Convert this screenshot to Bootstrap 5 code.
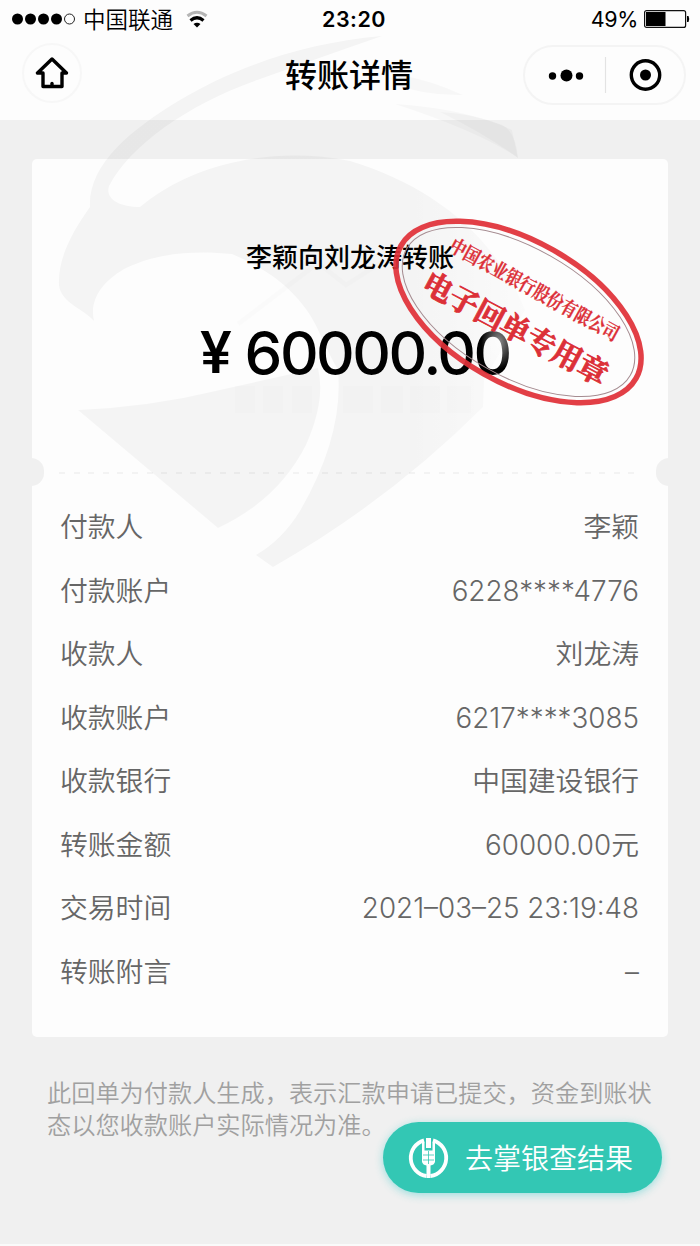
<!DOCTYPE html>
<html lang="zh-CN">

<head>
  <meta charset="UTF-8">
  <meta name="viewport" content="width=device-width, initial-scale=1.0">
  <link href="https://cdn.jsdelivr.net/npm/bootstrap@5.3.2/dist/css/bootstrap.min.css" rel="stylesheet">
  <title>转账详情</title>
  <style>
    body {
      background: #f0f0f0;
      font-family: Inter, "Noto Sans CJK SC", sans-serif;
      color: #000;
    }
    .screen {
      width: 700px;
      height: 1246px;
      overflow: hidden;
      border-bottom: 2px solid #fafafa;
    }
    .topbar {
      height: 120px;
      background: #fdfdfd;
    }
    .status {
      height: 38px;
      padding: 0 10px 0 12px;
      font-size: 22.5px;
      line-height: 38px;
    }
    .status > div {
      flex: 1 1 0;
    }
    .carrier {
      font-weight: 350;
      margin-left: 7px;
      margin-right: 13px;
      padding-top: 1px;
    }
    .clock {
      font-size: 21.5px;
      font-weight: 600;
      letter-spacing: .5px;
      padding-left: 6px;
    }
    .percent {
      font-size: 21.5px;
      letter-spacing: -.4px;
      margin-right: 6px;
    }
    .titlebar {
      height: 75px;
      padding: 0 14px 0 22px;
    }
    .titlebar h1 {
      font-size: 32px;
      font-weight: 500;
      line-height: 75px;
      padding-left: 93px;
    }
    .home-btn {
      width: 60px;
      height: 60px;
      border: 2px solid #f7f7f7;
      border-radius: 50%;
      margin-top: -6px;
    }
    .capsule {
      width: 163px;
      height: 60px;
      border: 2px solid #f4f4f4;
      border-radius: 30px;
      margin-top: -2px;
    }
    .receipt {
      width: 636px;
      height: 878px;
      margin: 39px auto 0;
      background: #fdfdfd;
      border-radius: 5px;
    }
    .summary {
      height: 313px;
      padding-top: 79px;
    }
    .summary p {
      font-size: 26px;
      line-height: 40px;
      font-weight: 500;
    }
    .amount {
      font-size: 60px;
      line-height: 80px;
      font-weight: 500;
      margin-top: 35px;
      padding-left: 10px;
      gap: 13px;
      letter-spacing: -2.5px;
    }
    .yen {
      font-family: Roboto, sans-serif;
      font-size: 59px;
      letter-spacing: 0;
    }
    .tear {
      height: 2px;
      margin: 0 27px;
      background: repeating-linear-gradient(90deg, #f3f3f3 0 6px, transparent 6px 14.6px);
    }
    .notch {
      top: 299px;
      width: 26px;
      height: 28px;
      border-radius: 13px;
      background: #f0f0f0;
    }
    .notch-l { left: -14px; }
    .notch-r { right: -14px; }
    .details {
      padding: 21px 29px 0 28px;
      color: #666;
      font-size: 27.8px;
      font-weight: 350;
    }
    .details > div {
      height: 63.5px;
      line-height: 64.5px;
    }
    .note {
      padding: 41px 39px 0 47px;
      font-size: 24.2px;
      line-height: 32px;
      font-weight: 350;
      color: #a0a0a0;
    }
    .go-btn {
      left: 383px;
      top: 1122px;
      width: 279px;
      height: 71px;
      border-radius: 36px;
      background: #33c7b4;
      color: #fff;
      font-size: 28px;
      font-weight: 350;
      line-height: 32px;
      gap: 16px;
      padding-left: 25px;
      box-shadow: 0 2px 9px rgba(51, 199, 200, .45);
    }
    .go-btn span {
      padding-top: 2px;
    }
    .stamp text {
      font-family: "Noto Serif CJK SC", "Noto Sans CJK SC", serif;
      font-weight: 700;
      fill: #dc3038;
      stroke: #dc3038;
    }
  </style>
</head>

<body>
  <div class="screen position-relative">
    <header class="topbar">
      <div class="status d-flex align-items-center">
        <div class="d-flex align-items-center">
          <svg width="64" height="12" viewBox="0 0 64 12">
            <circle cx="5.5" cy="6" r="5.5"/><circle cx="18.5" cy="6" r="5.5"/>
            <circle cx="31.5" cy="6" r="5.5"/><circle cx="44.5" cy="6" r="5.5"/>
            <circle cx="57.5" cy="6" r="5" fill="none" stroke="#222" stroke-width="1"/>
          </svg>
          <span class="carrier">中国联通</span>
          <svg width="22" height="18" viewBox="0 0 22 18" fill="none" stroke-width="3">
            <path d="M1.500 6Q11-1.500 20.500 6" stroke="#b5b5b5"/>
            <path d="M4.500 10.500Q11 5 17.500 10.500" stroke="#000" stroke-width="3.200"/>
            <path d="M7.500 14Q11 11.500 14.500 14L11 17.500z" fill="#000"/>
          </svg>
        </div>
        <div class="clock text-center">23:20</div>
        <div class="d-flex align-items-center justify-content-end">
          <span class="percent">49%</span>
          <svg width="46" height="18" viewBox="0 0 46 18">
            <rect x=".6" y=".6" width="41" height="16.800" rx="2" fill="none" stroke="#111" stroke-width="1.200"/>
            <rect x="2" y="2" width="19.500" height="14"/>
            <path d="M43 6h1.500q1.500 3 0 6H43z"/>
          </svg>
        </div>
      </div>
      <div class="titlebar d-flex align-items-center justify-content-between">
        <div class="home-btn d-flex align-items-center justify-content-center">
          <svg width="34" height="32" viewBox="0 0 34 32" fill="none" stroke="#000" stroke-width="3.400" stroke-linejoin="round" stroke-linecap="round">
            <path d="M17 2L2.500 16H8V29.500H27V16H31.500z"/>
            <path d="M17 26.500v2"/>
          </svg>
        </div>
        <h1 class="m-0">转账详情</h1>
        <div class="capsule d-flex align-items-center">
          <svg width="159" height="56" viewBox="0 0 159 56">
            <circle cx="27.500" cy="29" r="3.700"/><circle cx="41.500" cy="28.500" r="6"/><circle cx="54.500" cy="29" r="3.700"/>
            <path d="M80.500 10V46" stroke="#e3e3e3" stroke-width="1.200"/>
            <circle cx="120.500" cy="28" r="14.200" fill="none" stroke="#000" stroke-width="3.400"/>
            <circle cx="120.500" cy="28" r="5.500"/>
          </svg>
        </div>
      </div>
    </header>

    <main class="receipt position-relative">
      <div class="summary text-center">
        <p class="m-0">李颖向刘龙涛转账</p>
        <div class="amount d-flex justify-content-center"><span class="yen">¥</span><span>60000.00</span></div>
      </div>
      <div class="tear"></div>
      <span class="notch notch-l position-absolute"></span>
      <span class="notch notch-r position-absolute"></span>
      <div class="details">
        <div class="d-flex justify-content-between"><span>付款人</span><span>李颖</span></div>
        <div class="d-flex justify-content-between"><span>付款账户</span><span>6228****4776</span></div>
        <div class="d-flex justify-content-between"><span>收款人</span><span>刘龙涛</span></div>
        <div class="d-flex justify-content-between"><span>收款账户</span><span>6217****3085</span></div>
        <div class="d-flex justify-content-between"><span>收款银行</span><span>中国建设银行</span></div>
        <div class="d-flex justify-content-between"><span>转账金额</span><span>60000.00元</span></div>
        <div class="d-flex justify-content-between"><span>交易时间</span><span>2021–03–25 23:19:48</span></div>
        <div class="d-flex justify-content-between"><span>转账附言</span><span>–</span></div>
      </div>
    </main>

    <p class="note m-0">此回单为付款人生成，表示汇款申请已提交，资金到账状态以您收款账户实际情况为准。</p>

    <!-- eagle watermark and seal lie over the page -->
    <svg class="stamp position-absolute top-0 start-0 pe-none" width="700" height="620" viewBox="0 0 700 620">
      <defs>
        <radialGradient id="haze">
          <stop offset="0" stop-color="#fff" stop-opacity=".55"/>
          <stop offset="1" stop-color="#fff" stop-opacity="0"/>
        </radialGradient>
        <linearGradient id="fade" x1="0" x2="1">
          <stop offset="0" stop-opacity=".037"/>
          <stop offset=".75" stop-opacity=".037"/>
          <stop offset="1" stop-opacity=".01"/>
        </linearGradient>
      </defs>
      <path fill="url(#fade)" d="M382 36C300 43 230 70 180 100C130 130 88 165 90 207C70 235 58 260 59 285C61 303 84 309 94 321C89 300 102 282 124 269C160 251 200 251 232 254C276 272 306 300 320 334Q329 354 338 370Q344 435 300 511Q282 540 256 555L273 567Q390 500 483 407L484 380L525 310C495 235 430 185 350 161C270 145 190 165 140 207C118 207 105 198 109 186C130 145 190 103 260 79Q330 54 382 36z"/>
      <path fill-opacity=".037" d="M78 410Q150 407 220 390L318 368Q326 400 306 445Q278 500 218 528z"/>
      <path fill-opacity=".025" d="M400 75Q430 80 463 95Q424 96 395 84zM395 104Q450 107 500 124Q516 130 518 158Q480 132 395 104z"/>
      <path fill-opacity=".022" d="M440 112Q480 114 512 130L518 158Q485 134 440 112z"/>
      <path fill="none" stroke="#000" stroke-opacity=".013" stroke-width="5" d="M238 324L318 263L346 285L382 262"/>
      <path fill="#667" fill-opacity=".014" d="M235 386h20v27h-20zM263 386h20v27h-20zM292 386h20v27h-20zM343 386h30v27h-30zM381 386h22v27h-22zM410 386h30v27h-30zM447 386h24v27h-24z"/>
      <ellipse cx="499" cy="342" rx="18" ry="27" fill="url(#haze)"/>
      <g transform="translate(518.500 312) rotate(29.500)">
        <ellipse rx="135" ry="71" fill="none" stroke="#e03038" stroke-opacity=".93" stroke-width="5.500"/>
        <ellipse rx="128.500" ry="64.500" fill="none" stroke="#a58b90" stroke-width="1"/>
      </g>
      <text transform="translate(448 250) rotate(28.800)" textLength="190" lengthAdjust="spacingAndGlyphs" font-size="19.500" stroke-width=".3">中国农业银行股份有限公司</text>
      <text transform="translate(420 290) rotate(28)" textLength="205" lengthAdjust="spacing" font-size="30" stroke-width=".8">电子回单专用章</text>
    </svg>

    <a class="go-btn position-absolute d-flex align-items-center text-decoration-none" href="#">
      <svg width="41" height="42" viewBox="0 0 41 42">
        <path d="M16 3.300A18.300 18.300 0 0 0 18.500 39M25 3.300A18.300 18.300 0 0 1 22.500 39" fill="none" stroke="#fff" stroke-width="3.800"/>
        <path d="M18 1h5v10h-5zM14 5h2.500v8.500h8V5H27v20q-1 3-4.500 3.500V41h-4V28.500q-3.500-.500-4.500-3.500z" fill="#fff"/>
        <path d="M20.500 14v13M15 18h11M15 23h11" stroke="#33c7b4" stroke-width=".8"/>
      </svg>
      <span>去掌银查结果</span>
    </a>
  </div>
  <script src="https://cdn.jsdelivr.net/npm/bootstrap@5.3.2/dist/js/bootstrap.bundle.min.js"></script>
</body>

</html>
